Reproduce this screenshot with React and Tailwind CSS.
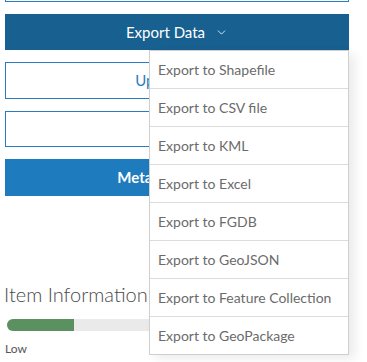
import { ChevronDown } from 'lucide-react'

const exportOptions = [
  'Export to Shapefile',
  'Export to CSV file',
  'Export to KML',
  'Export to Excel',
  'Export to FGDB',
  'Export to GeoJSON',
  'Export to Feature Collection',
  'Export to GeoPackage',
]

function App() {
  return (
    <div className="relative h-[362px] w-[367px] overflow-hidden bg-white font-['Lato','Open_Sans',sans-serif]">
      <div className="flex flex-col px-[5px] pr-[18px]">
        {/* tail of the box above */}
        <div className="h-[2px] border-x border-b border-[#2b7bc0]" />

        <button className="mt-[12px] flex h-[36px] items-center justify-center gap-[10px] bg-[#17608f] text-[15px] text-white">
          Export Data
          <ChevronDown size={13} strokeWidth={1.5} />
        </button>

        <button className="mt-[12px] flex h-[37px] items-center justify-center border border-[#2b7bc0] text-[15px] text-[#2b7bc0]">
          Update Data
        </button>

        <button className="mt-[12px] flex h-[36px] items-center justify-center border border-[#2b7bc0] text-[15px] text-[#2b7bc0]">
          Publish
        </button>

        <button className="mt-[12px] flex h-[37px] items-center justify-center bg-[#1d7bbe] text-[15px] font-bold text-white">
          Metadata Editor…
        </button>

        {/* Item information */}
        <div className="mt-[83px] -ml-[1px] text-[20px] font-light text-[#4a4a4a]">
          Item Information
        </div>
        <div className="mt-[10px] ml-[2px] h-[12px] rounded-full bg-[#eaeaea]">
          <div className="h-full w-[67px] rounded-l-full bg-[#5b9161]" />
        </div>
        <div className="mt-[9px] flex justify-between text-[12px] text-[#555]">
          <span>Low</span>
          <span className="pr-[6px]">High</span>
        </div>
      </div>

      {/* dropdown menu */}
      <div className="absolute left-[149px] top-[50px] w-[200px] border border-[#cfcfcf] bg-white shadow-[6px_4px_10px_rgba(0,0,0,0.08)]">
        {exportOptions.map((label, i) => (
          <div
            key={label}
            className={`flex h-[37px] box-content items-center pl-[8px] text-[14px] text-[#6b6b6b] ${i > 0 ? 'border-t border-[#dcdcdc]' : ''}`}
          >
            {label}
          </div>
        ))}
      </div>
    </div>
  )
}

export default App
